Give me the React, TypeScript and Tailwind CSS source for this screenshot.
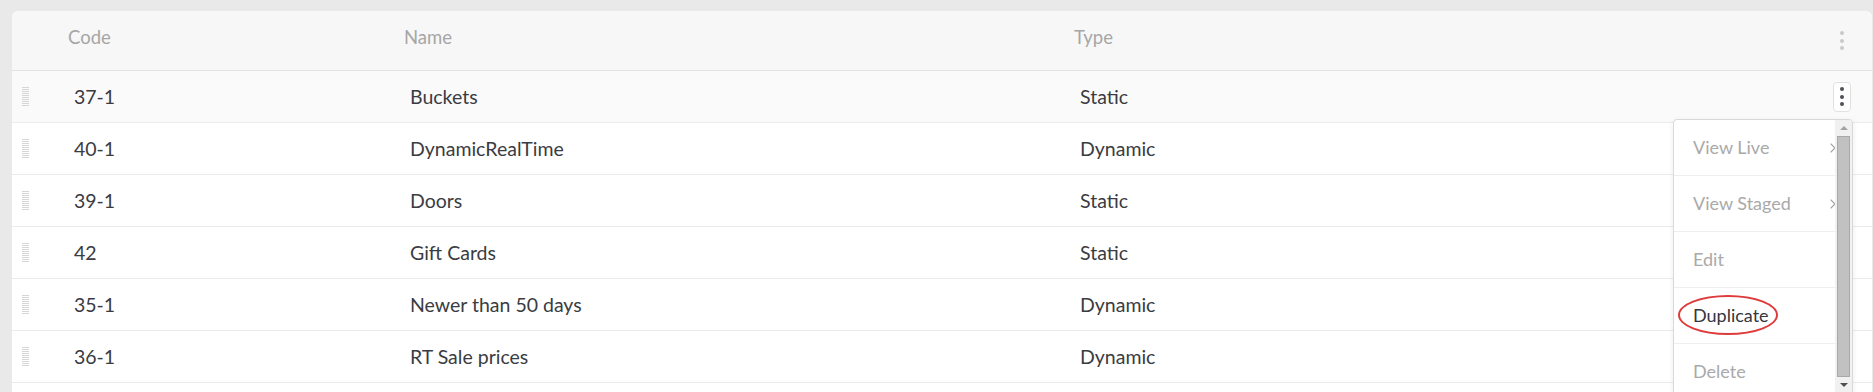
import { ChevronRight } from 'lucide-react'

const ROWS = [
  { code: '37-1', name: 'Buckets', type: 'Static' },
  { code: '40-1', name: 'DynamicRealTime', type: 'Dynamic' },
  { code: '39-1', name: 'Doors', type: 'Static' },
  { code: '42', name: 'Gift Cards', type: 'Static' },
  { code: '35-1', name: 'Newer than 50 days', type: 'Dynamic' },
  { code: '36-1', name: 'RT Sale prices', type: 'Dynamic' },
]

const MENU = [
  { label: 'View Live', sub: true },
  { label: 'View Staged', sub: true },
  { label: 'Edit' },
  { label: 'Duplicate', active: true },
  { label: 'Delete' },
]

function Kebab({ dark }: { dark?: boolean }) {
  const dot = dark ? 'h-[4px] w-[4px] rounded-full bg-[#4e5158]' : 'h-[4px] w-[4px] rounded-full bg-[#c9c9c9]'
  return (
    <div className="flex flex-col items-center gap-[3.5px]">
      <span className={dot} />
      <span className={dot} />
      <span className={dot} />
    </div>
  )
}

function DragHandle() {
  return (
    <div className="flex w-[7px] flex-col gap-[1px]">
      {Array.from({ length: 10 }).map((_, i) => (
        <span key={i} className="h-[1px] w-full bg-[#d6d6d6]" />
      ))}
    </div>
  )
}

function ActionMenu() {
  return (
    <div className="absolute left-[1661px] top-[108px] flex h-[300px] w-[180px] overflow-hidden rounded-t-[4px] border border-[#d9d9d9] bg-white shadow-[0_2px_6px_rgba(0,0,0,0.08)]">
      <div className="w-[161px] shrink-0 overflow-hidden">
        {MENU.map((m) => (
          <div
            key={m.label}
            className="relative flex h-[56px] items-center border-b border-[#eeeeee] pl-[19px] text-[18px]"
          >
            <span className={m.active ? 'text-[#35373c]' : 'text-[#a9a9a9]'}>{m.label}</span>
            {m.sub && (
              <ChevronRight
                className="absolute right-[-6px] top-1/2 -translate-y-1/2 text-[#a3a3a3]"
                size={16}
                strokeWidth={1.6}
              />
            )}
            {m.active && (
              <span className="absolute left-[4px] top-[7px] h-[40px] w-[100px] rounded-[50%] border-2 border-[#df3b3b]" />
            )}
          </div>
        ))}
      </div>
      {/* fake scrollbar */}
      <div className="flex w-[17px] shrink-0 flex-col bg-[#f1f1f1]">
        <div className="flex h-[16px] items-center justify-center">
          <span className="h-0 w-0 border-x-[4px] border-b-[4px] border-x-transparent border-b-[#a3a3a3]" />
        </div>
        <div className="mx-[2px] h-[241px] border border-[#a9a9a9] bg-[#c1c1c1]" />
        <div className="flex h-[16px] items-center justify-center">
          <span className="h-0 w-0 border-x-[4px] border-t-[4px] border-x-transparent border-t-[#505050]" />
        </div>
      </div>
    </div>
  )
}

export default function App() {
  return (
    <div
      className="relative h-[392px] w-full overflow-hidden bg-[#e9e9e9] pl-[12px] pr-[1px] pt-[11px]"
      style={{ fontFamily: 'Lato, "Liberation Sans", sans-serif' }}
    >
      <div className="relative h-full rounded-t-[6px] bg-white">
        {/* header */}
        <div className="flex h-[60px] items-center rounded-t-[6px] border-b border-[#e3e3e3] bg-[#f7f7f7] pb-[6px] text-[18.5px] text-[#a6a6a6]">
          <div className="w-[392px] shrink-0 pl-[56px]">Code</div>
          <div className="w-[670px] shrink-0">Name</div>
          <div className="flex-1">Type</div>
          <div className="flex w-[58px] justify-center pr-[3px] pt-[6px]">
            <Kebab />
          </div>
        </div>

        {/* rows */}
        {ROWS.map((r, i) => (
          <div
            key={r.code}
            className={`flex h-[52px] items-center border-b border-[#ebebeb] text-[19.5px] text-[#3a3c42] ${
              i === 0 ? 'bg-[#fafafa]' : 'bg-white'
            }`}
          >
            <div className="flex w-[398px] shrink-0 items-center">
              <div className="w-[62px] shrink-0 pl-[10px]">
                <DragHandle />
              </div>
              <span>{r.code}</span>
            </div>
            <div className="w-[670px] shrink-0">{r.name}</div>
            <div className="flex-1">{r.type}</div>
            <div className="flex w-[58px] justify-center pr-[3px]">
              {i === 0 && (
                <div className="flex h-[30px] w-[18px] items-center justify-center rounded-[4px] border border-[#e1e1e1] bg-white">
                  <Kebab dark />
                </div>
              )}
            </div>
          </div>
        ))}
        {/* next row, below the fold */}
        <div className="h-[52px] border-b border-[#ebebeb] bg-white" />

        <ActionMenu />
      </div>
    </div>
  )
}
